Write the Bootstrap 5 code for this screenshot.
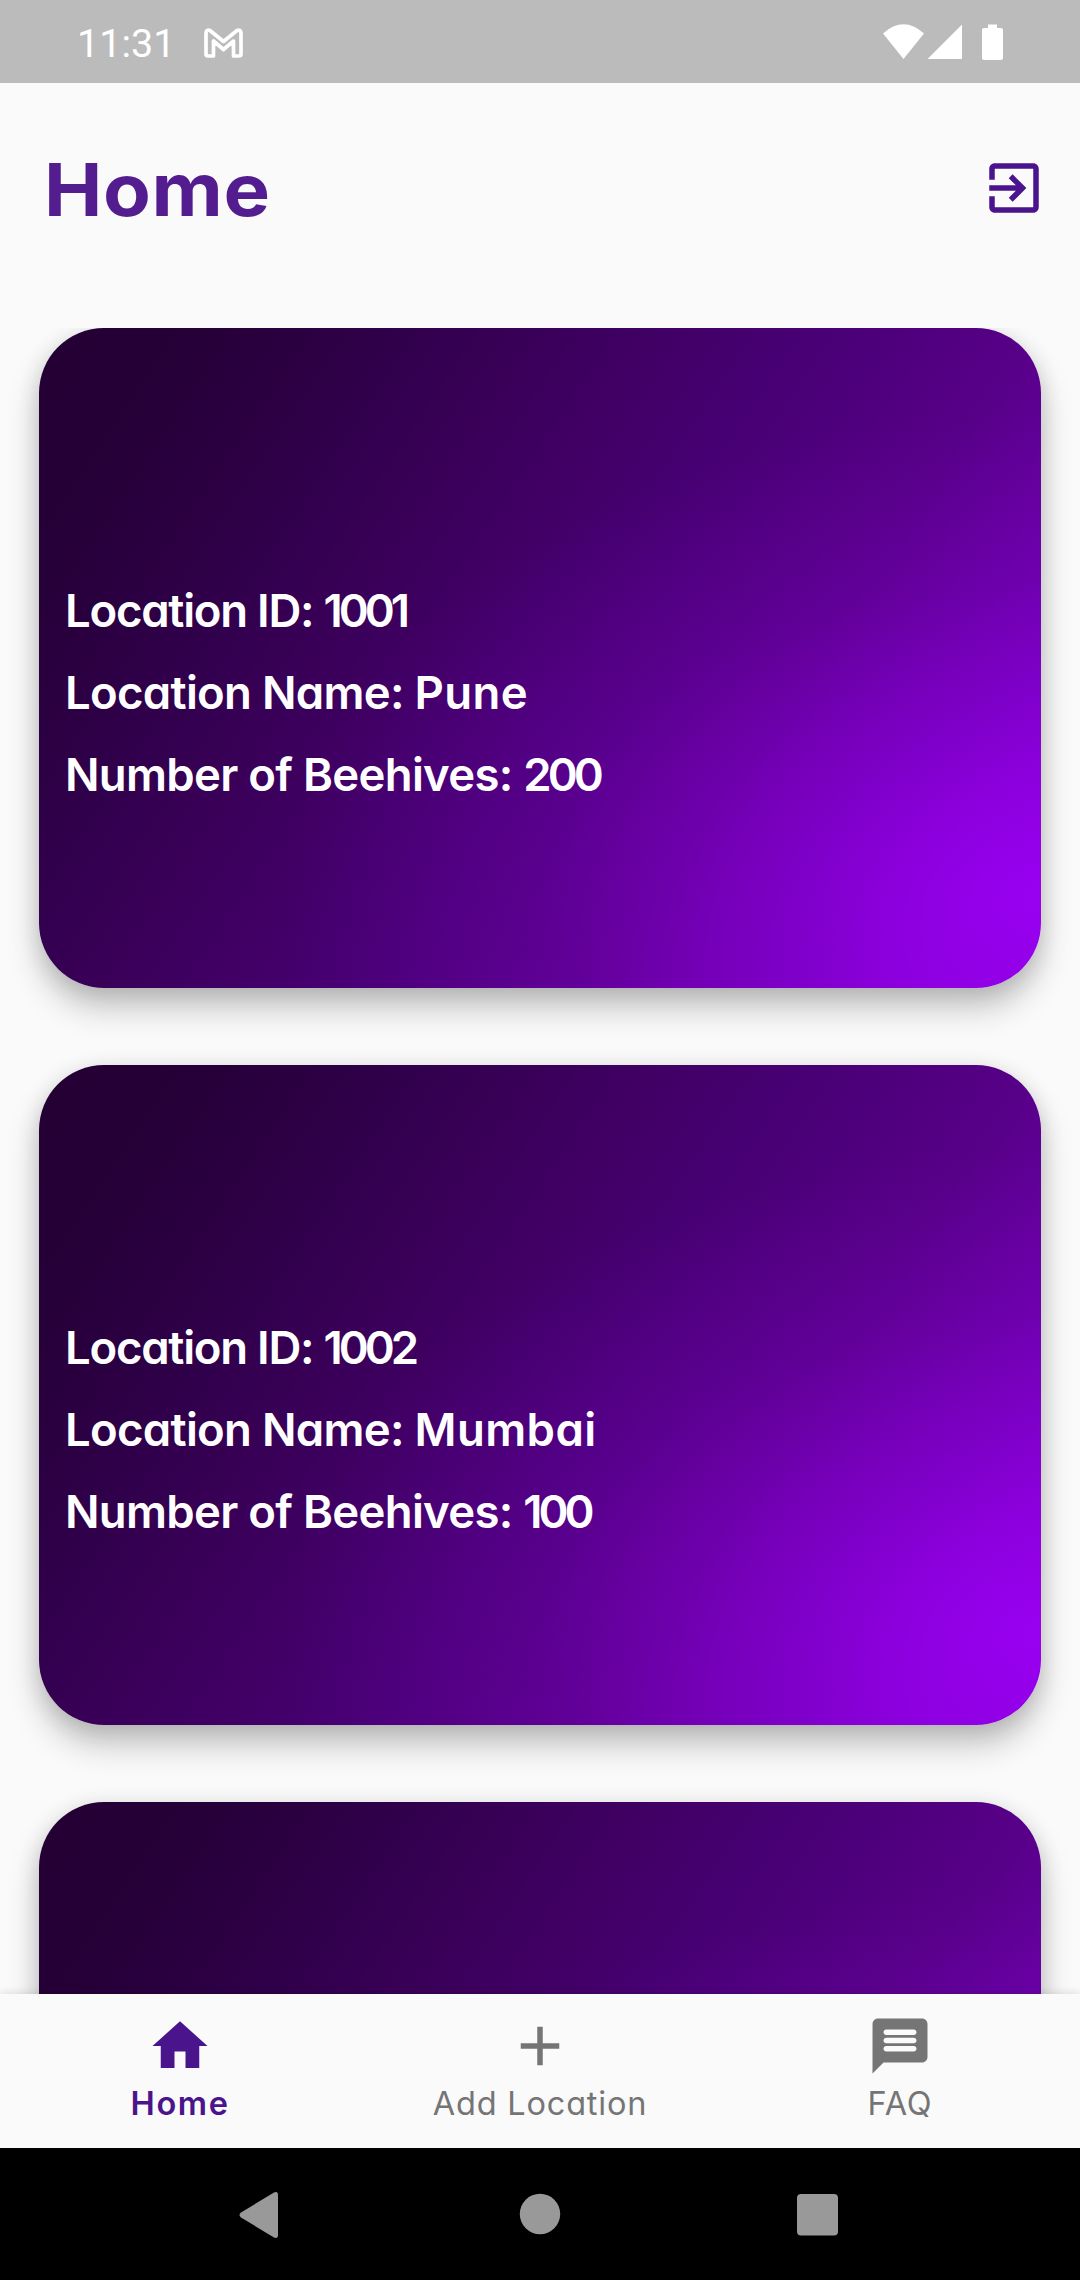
<!DOCTYPE html>
<html lang="en">
<head>
<meta charset="utf-8">
<meta name="viewport" content="width=device-width, initial-scale=1">
<title>Home</title>
<link href="https://cdn.jsdelivr.net/npm/bootstrap@5.3.0/dist/css/bootstrap.min.css" rel="stylesheet">
<style>
  body { background: #fafafa; font-family: Inter, "Open Sans", sans-serif; font-feature-settings: "cv11"; }
  .screen { width: 1080px; height: 2280px; }
  .status { height: 83px; background: #bbb; font: 400 39.5px/1 Roboto, sans-serif; padding: 2px 77px 0 77px; }
  .status .clock { padding-top: 2px; }
  .gmail { margin-left: 29px; }
  .title-bar { height: 245px; padding: 0 33px 36px 44px; color: #4a148c; }
  .title-bar h1 { font-size: 73px; font-weight: 700; line-height: 1; letter-spacing: .6px; color: #531d8f; padding-top: 4px; transform: scaleX(1.07); transform-origin: 0 50%; }
  .feed { height: 1666px; padding: 0 39px; gap: 77px; }
  .place { height: 660px; border-radius: 65px; padding: 242px 26px 0; color: #fff;
    font-size: 45.5px; font-weight: 600; line-height: 82.2px; letter-spacing: -.7px; white-space: nowrap;
    background:
      radial-gradient(ellipse 760px 480px at 100% 86%, rgba(156,0,246,.85) 0%, rgba(152,0,240,.5) 32%, rgba(140,0,220,.2) 65%, rgba(130,0,205,0) 100%),
      linear-gradient(123.7deg, #230034 0%, #260038 12%, #2f0049 24%, #3a0059 35%, #490076 55%, #570088 69%, #6b00aa 83%, #7e00c8 92%, #8800d6 100%);
    box-shadow: 0 20px 32px rgba(0,0,0,.22), 0 4px 22px rgba(0,0,0,.12); }
  .place .loc-id { letter-spacing: -1.25px; }
  .place .num { letter-spacing: -4px; }
  .place .city { letter-spacing: .4px; }
  .tabs { height: 154px; background: #fafafa; color: #757575; font-size: 32.5px; letter-spacing: .8px; box-shadow: 0 -1px 8px rgba(0,0,0,.12); z-index: 2; }
  .tabs a { color: inherit; padding-top: 19px; line-height: 50px; text-decoration: none; }
  .tabs a.active { color: #4a148c; font-weight: 600; letter-spacing: 1.6px; }
  .sys { height: 132px; }
</style>
</head>
<body>
<div class="screen d-flex flex-column overflow-hidden">
  <header class="status d-flex align-items-center text-white flex-shrink-0">
    <span class="clock">11:31</span>
    <svg class="gmail" width="39" height="30" viewBox="0 0 39 30" fill="none" stroke="#fff" stroke-width="3.700" stroke-linejoin="round"><path d="M4 28q-2 0-2-2V5Q2.500 1 6 2.500l13.500 11L33 2.500q3.500-1.500 4 2.500v21q0 2-2 2h-5.500V13L19.500 21.500 9.500 13v15z"/></svg>
    <svg class="ms-auto" width="120" height="37" viewBox="0 0 120 37" fill="#fff"><path d="M0 9.500Q20.500-9 41 9.500L20.500 35zM79 .5V35H44.500zM105 4V.5h9V4h4q2 0 2 2v28q0 2-2 2h-17q-2 0-2-2V6q0-2 2-2z"/></svg>
  </header>
  <div class="title-bar d-flex align-items-center justify-content-between flex-shrink-0">
    <h1 class="m-0">Home</h1>
    <svg width="66" height="66" viewBox="0 0 24 24" fill="currentColor"><path d="M10.090 15.590L11.500 17l5-5-5-5-1.410 1.410L12.670 11H3v2h9.670l-2.580 2.590zM19 3H5c-1.110 0-2 .9-2 2v4h2V5h14v14H5v-4H3v4c0 1.100.890 2 2 2h14c1.100 0 2-.9 2-2V5c0-1.100-.9-2-2-2z"/></svg>
  </div>
  <main class="feed d-flex flex-column overflow-hidden flex-shrink-0">
    <section class="place flex-shrink-0"><div class="loc-id">Location ID: <span class="num">1001</span></div><div>Location Name: <span class="city">Pune</span></div><div>Number of Beehives: <span class="num">200</span></div></section>
    <section class="place flex-shrink-0"><div class="loc-id">Location ID: <span class="num">1002</span></div><div>Location Name: <span class="city">Mumbai</span></div><div>Number of Beehives: <span class="num">100</span></div></section>
    <section class="place flex-shrink-0"></section>
  </main>
  <nav class="tabs d-flex text-center flex-shrink-0 position-relative">
    <a href="#" class="active col-4 d-flex flex-column align-items-center"><svg width="66" height="66" viewBox="0 0 24 24" fill="currentColor"><path d="M10 20v-6h4v6h5v-8h3L12 3 2 12h3v8z"/></svg><span>Home</span></a>
    <a href="#" class="col-4 d-flex flex-column align-items-center"><svg width="66" height="66" viewBox="0 0 24 24" fill="currentColor"><path d="M19 13h-6v6h-2v-6H5v-2h6V5h2v6h6v2z"/></svg><span>Add Location</span></a>
    <a href="#" class="col-4 d-flex flex-column align-items-center"><svg width="66" height="66" viewBox="0 0 24 24" fill="currentColor"><path d="M20 2H4c-1.100 0-1.990.9-1.990 2L2 22l4-4h14c1.100 0 2-.9 2-2V4c0-1.100-.9-2-2-2zm-3 12H7c-.550 0-1-.450-1-1s.450-1 1-1h10c.550 0 1 .450 1 1s-.450 1-1 1zm0-3H7c-.550 0-1-.450-1-1s.450-1 1-1h10c.550 0 1 .450 1 1s-.450 1-1 1zm0-3H7c-.550 0-1-.450-1-1s.450-1 1-1h10c.550 0 1 .450 1 1s-.450 1-1 1z"/></svg><span>FAQ</span></a>
  </nav>
  <footer class="sys bg-black flex-shrink-0">
    <svg class="d-block" width="1080" height="132" viewBox="0 0 1080 132" fill="#999"><path d="M241 69.500q-3-2.500 0-5L274 44.500q4-1.500 4 2.500v40q0 4-4 2.500z"/><circle cx="540" cy="66" r="20.200"/><rect x="797" y="46" width="41" height="41.500" rx="4"/></svg>
  </footer>
</div>
<script src="https://cdn.jsdelivr.net/npm/bootstrap@5.3.0/dist/js/bootstrap.bundle.min.js"></script>
</body>
</html>
